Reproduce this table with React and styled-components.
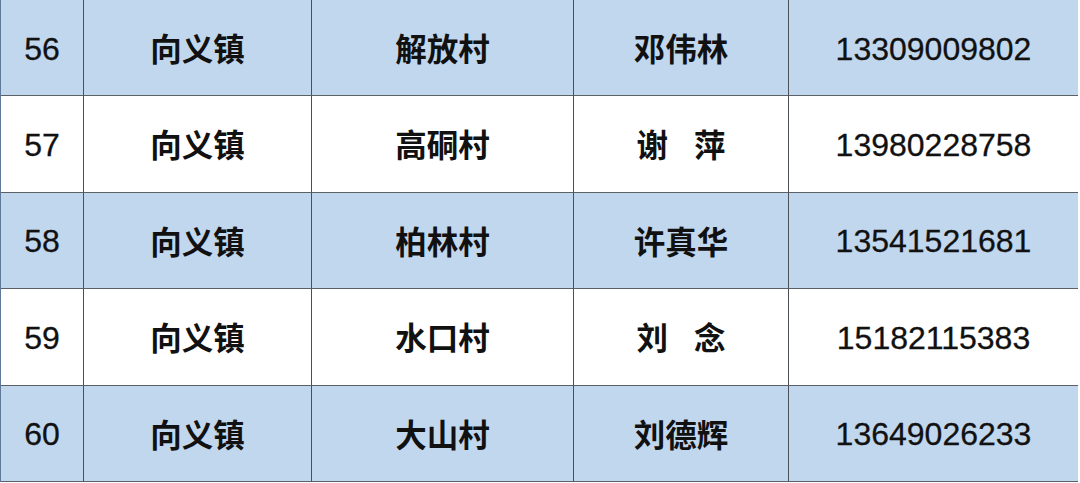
import React from "react";
import styled, { createGlobalStyle } from "styled-components";

const GlobalStyle = createGlobalStyle`
  html, body {
    margin: 0;
    padding: 0;
    background: #ffffff;
  }
`;

const rows = [
  { id: 56, town: "向义镇", village: "解放村", name: ["邓伟林"], phone: "13309009802" },
  { id: 57, town: "向义镇", village: "高硐村", name: ["谢", "萍"], phone: "13980228758" },
  { id: 58, town: "向义镇", village: "柏林村", name: ["许真华"], phone: "13541521681" },
  { id: 59, town: "向义镇", village: "水口村", name: ["刘", "念"], phone: "15182115383" },
  { id: 60, town: "向义镇", village: "大山村", name: ["刘德辉"], phone: "13649026233" },
];

const Table = styled.div`
  display: grid;
  grid-template-columns: 83px 228px 262px 215px 289px;
  grid-template-rows: repeat(5, 1fr);
  width: 1077px;
  height: 482px;
  border-left: 1px solid #5d7898;
  border-right: 1px solid #d8e4f0;
  box-sizing: border-box;
`;

const Cell = styled.div`
  display: flex;
  align-items: center;
  justify-content: center;
  background: ${(p) => (p.$shaded ? "#c1d7ee" : "#ffffff")};
  border-right: ${(p) => (p.$last ? "none" : "1px solid #4a4f58")};
  border-bottom: 1px solid #5b5f66;
  box-sizing: border-box;
  color: #111111;
  font-family: ${(p) =>
    p.$num
      ? `"Liberation Sans", Arial, sans-serif`
      : `"Noto Sans CJK SC", "Noto Sans", sans-serif`};
  font-size: ${(p) => (p.$num ? "32px" : "31.5px")};
  font-weight: ${(p) => (p.$num ? 400 : 700)};
  -webkit-text-stroke: ${(p) => (p.$num ? "0.3px #111" : "0")};
  line-height: 1;
  padding-top: ${(p) => (p.$num ? "2px" : "0")};
`;

const Gap = styled.span`
  display: inline-block;
  width: 26px;
`;

export default function App() {
  return (
    <>
      <GlobalStyle />
      <Table>
        {rows.map((r, i) => {
          const shaded = i % 2 === 0;
          return (
            <React.Fragment key={r.id}>
              <Cell $shaded={shaded} $num>{r.id}</Cell>
              <Cell $shaded={shaded}>{r.town}</Cell>
              <Cell $shaded={shaded}>{r.village}</Cell>
              <Cell $shaded={shaded}>
                {r.name.length > 1 ? (
                  <>
                    {r.name[0]}
                    <Gap />
                    {r.name[1]}
                  </>
                ) : (
                  r.name[0]
                )}
              </Cell>
              <Cell $shaded={shaded} $num $last>{r.phone}</Cell>
            </React.Fragment>
          );
        })}
      </Table>
    </>
  );
}
